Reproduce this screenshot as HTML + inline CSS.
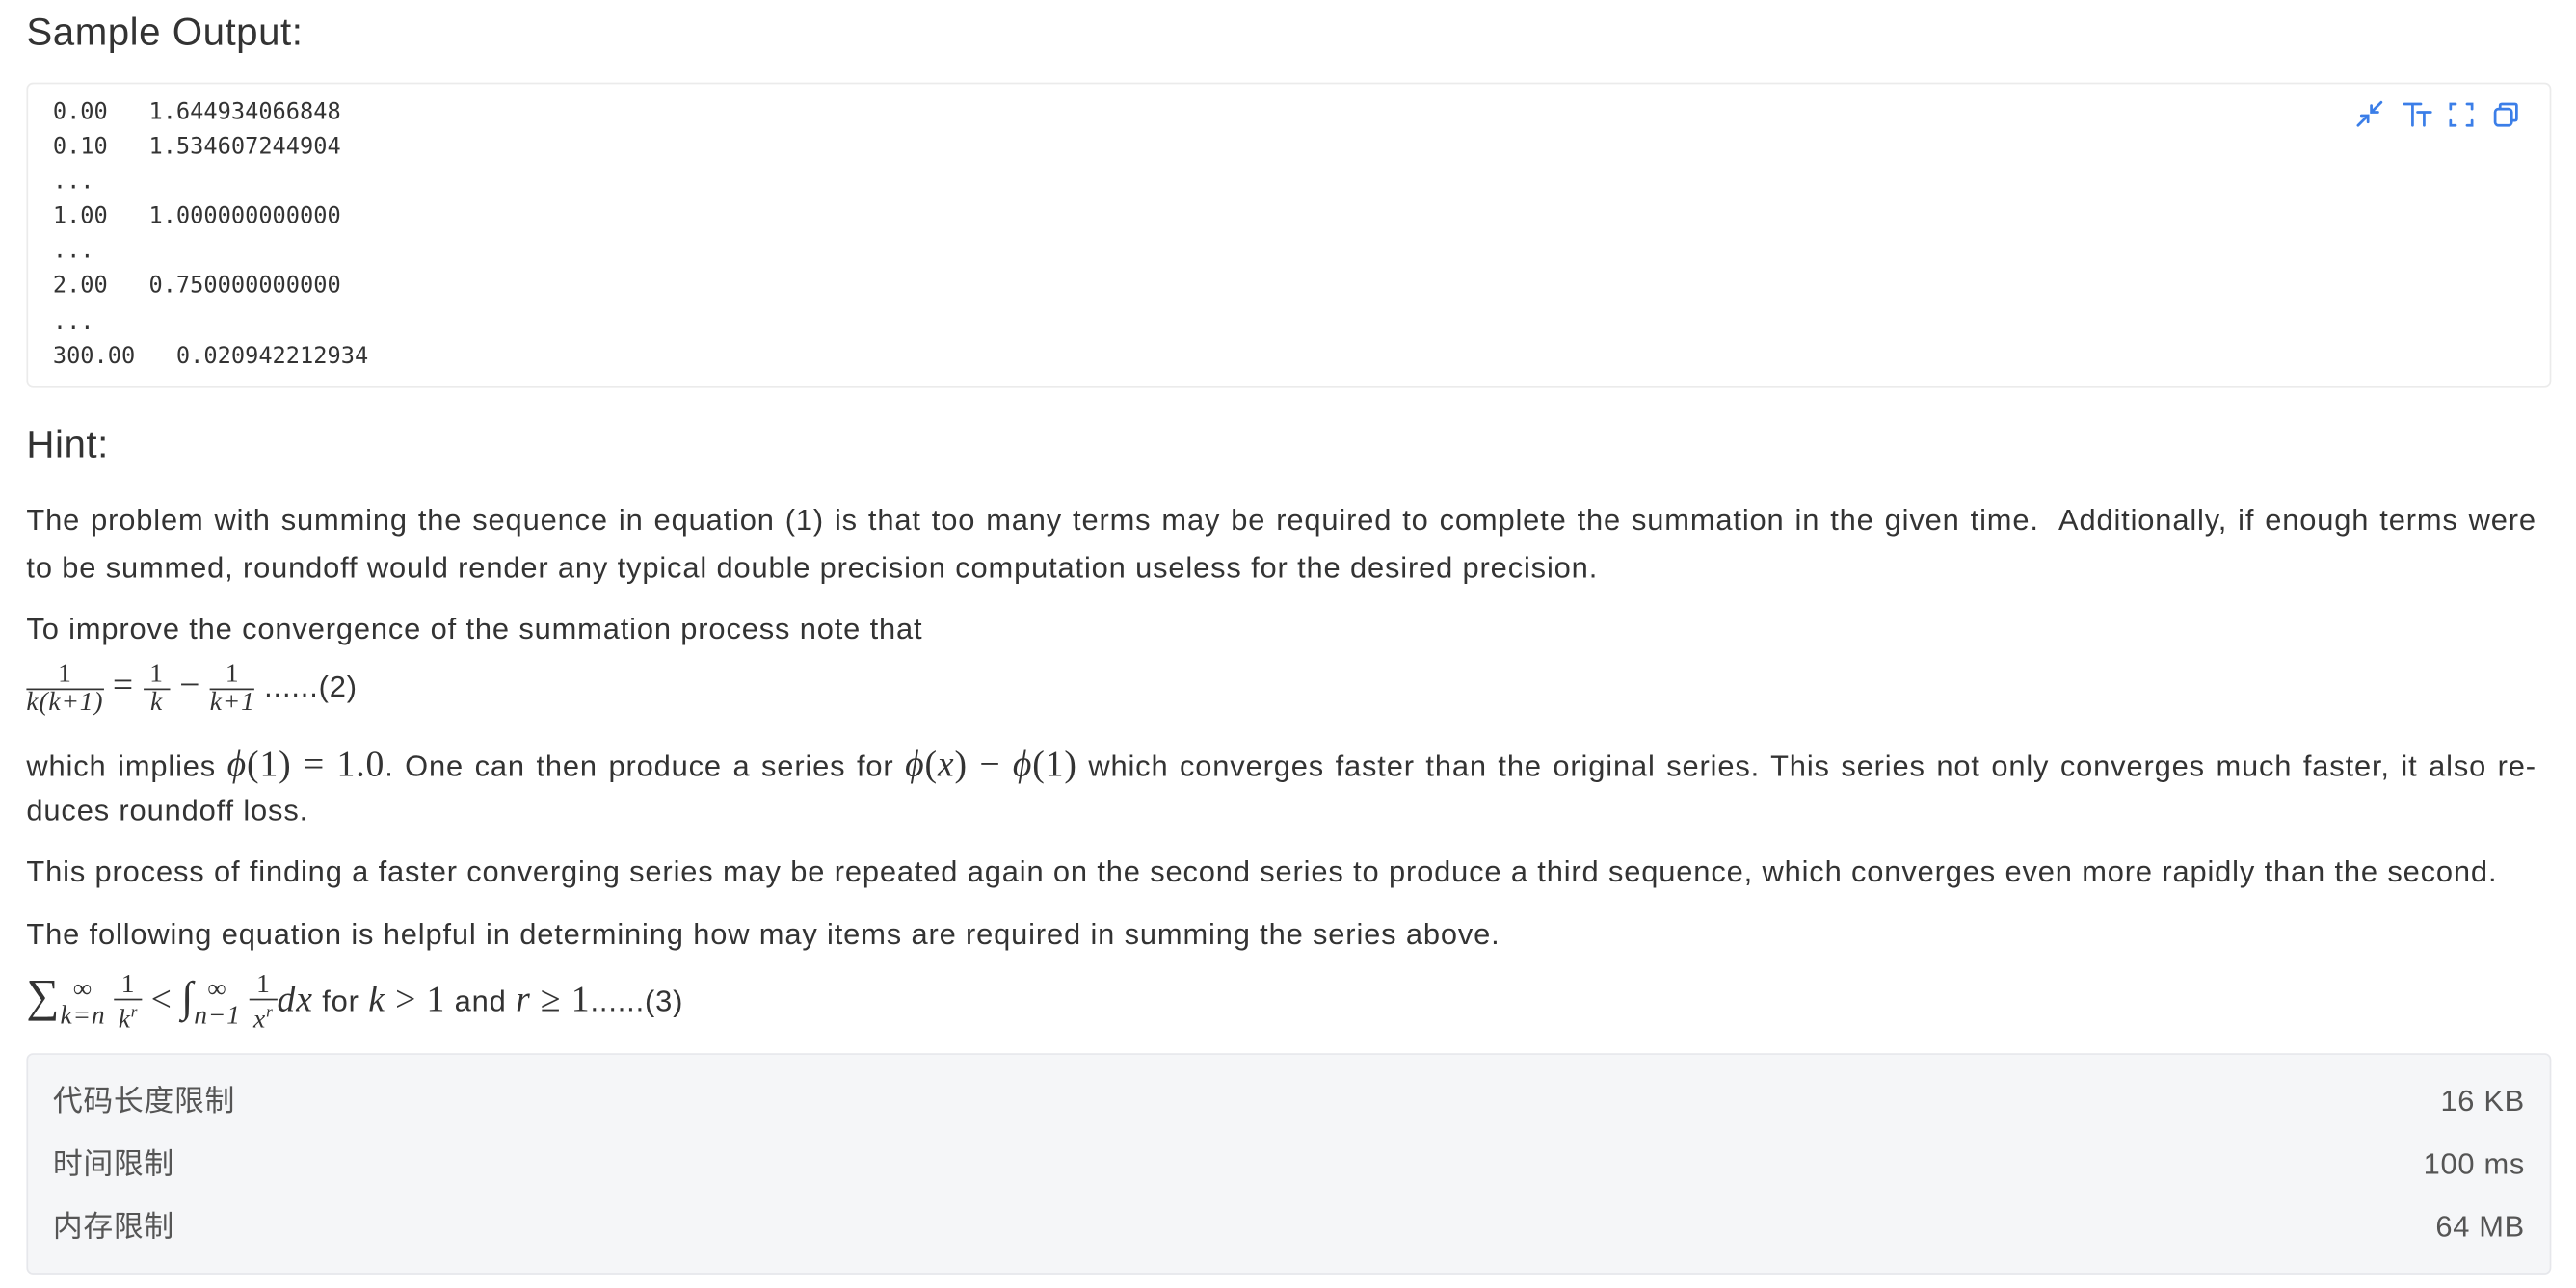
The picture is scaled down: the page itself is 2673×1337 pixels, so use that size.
<!DOCTYPE html>
<html><head><meta charset="utf-8">
<style>
html,body{margin:0;padding:0;background:#fff;width:2673px;height:1336px;overflow:hidden}
#w{position:absolute;left:0;top:0;width:1560px;height:780px;transform:scale(1.7135);transform-origin:0 0;font-family:"Liberation Sans","Noto Sans CJK SC",sans-serif;color:#333}
.a{position:absolute}
h2{position:absolute;margin:0;font-weight:normal;font-size:23.5px;color:#333;left:16px;letter-spacing:0.3px}
.code{left:16px;top:50px;width:1527px;height:183px;border:1px solid #ebebeb;border-radius:4px;background:#fff}
.code pre{position:absolute;left:15px;top:7px;margin:0;font-family:"DejaVu Sans Mono","Liberation Mono",monospace;font-size:13.8px;line-height:21.1px;color:#333}
.p{position:absolute;left:16px;width:1520px;font-size:18px;letter-spacing:0.5px;line-height:29px;white-space:nowrap}
.j{text-align:justify;text-align-last:justify;white-space:normal}
.m{font-family:"Liberation Serif",serif;font-size:22px;letter-spacing:0.5px}
.i{font-style:italic}
.fr{display:inline-block;vertical-align:middle;text-align:center;font-family:"Liberation Serif",serif;font-size:16px;line-height:16px;letter-spacing:0.5px}
.fr .n{border-bottom:1px solid #333;padding:0 4px}
.info{left:16px;top:638px;width:1527px;height:132px;background:#f5f6f8;border:1px solid #e6e7eb;border-radius:4px}
.row{position:absolute;left:15px;right:15px;font-size:18px;color:#555;line-height:24px;letter-spacing:0.4px}
.row span{float:right}
</style></head><body><div id="w">
<h2 style="top:6px">Sample Output:</h2>
<div class="a code"><pre>0.00   1.644934066848
0.10   1.534607244904
...
1.00   1.000000000000
...
2.00   0.750000000000
...
300.00   0.020942212934</pre>
<svg class="a" style="left:1410px;top:9px" width="104" height="18" viewBox="0 0 104 18" fill="none" stroke="#3b7ee8" stroke-width="1.6" stroke-linecap="round">
<path d="M1 16 L7 10 M3 10 H7 V14 M15 2 L9 8 M9 4 V8 H13"/>
<path d="M29 3 H39 M34 3 V16 M37 8 H45 M41 8 V16"/>
<path d="M57 6 V3 H60 M67 3 H70 V6 M70 13 V16 H67 M60 16 H57 V13"/>
<rect x="84" y="6" width="10" height="10" rx="2"/><path d="M87 6 V4 Q87 3 88 3 H96 Q97 3 97 4 V12 Q97 13 96 13 H94"/>
</svg>
</div>
<h2 style="top:256px">Hint:</h2>
<div class="p j" style="top:301px">The problem with summing the sequence in equation (1) is that too many terms may be required to complete the summation in the given time.&nbsp; Additionally, if enough terms were</div>
<div class="p" style="top:330px">to be summed, roundoff would render any typical double precision computation useless for the desired precision.</div>
<div class="p" style="top:367px">To improve the convergence of the summation process note that</div>
<div class="p" style="top:400px"><span class="fr"><div class="n">1</div><div class="i">k(k+1)</div></span> <span class="m">=</span> <span class="fr"><div class="n">1</div><div class="i">k</div></span> <span class="m">−</span> <span class="fr"><div class="n">1</div><div class="i">k+1</div></span> ......(2)</div>
<div class="p j" style="top:448px">which implies <span class="m"><i>ϕ</i>(1) = 1.0</span>. One can then produce a series for <span class="m"><i>ϕ</i>(<i>x</i>) − <i>ϕ</i>(1)</span> which converges faster than the original series. This series not only converges much faster, it also re-</div>
<div class="p" style="top:477px">duces roundoff loss.</div>
<div class="p" style="top:514px">This process of finding a faster converging series may be repeated again on the second series to produce a third sequence, which converges even more rapidly than the second.</div>
<div class="p" style="top:552px">The following equation is helpful in determining how may items are required in summing the series above.</div>
<div class="p" style="top:589px"><span class="m" style="font-size:28px">∑</span><span class="fr" style="font-size:16px"><div>∞</div><div class="i">k=n</div></span> <span class="fr"><div class="n">1</div><div class="i">k<sup style="font-size:10px">r</sup></div></span> <span class="m">&lt;</span> <span class="m" style="font-size:26px">∫</span><span class="fr" style="font-size:16px"><div>∞</div><div class="i">n−1</div></span> <span class="fr"><div class="n">1</div><div class="i">x<sup style="font-size:10px">r</sup></div></span><span class="m i">dx</span> for <span class="m"><i>k</i> &gt; 1</span> and <span class="m"><i>r</i> ≥ 1</span>......(3)</div>
<div class="a info">
<div class="row" style="top:16px">代码长度限制<span>16 KB</span></div>
<div class="row" style="top:54px">时间限制<span>100 ms</span></div>
<div class="row" style="top:92px">内存限制<span>64 MB</span></div>
</div>
</div></body></html>
